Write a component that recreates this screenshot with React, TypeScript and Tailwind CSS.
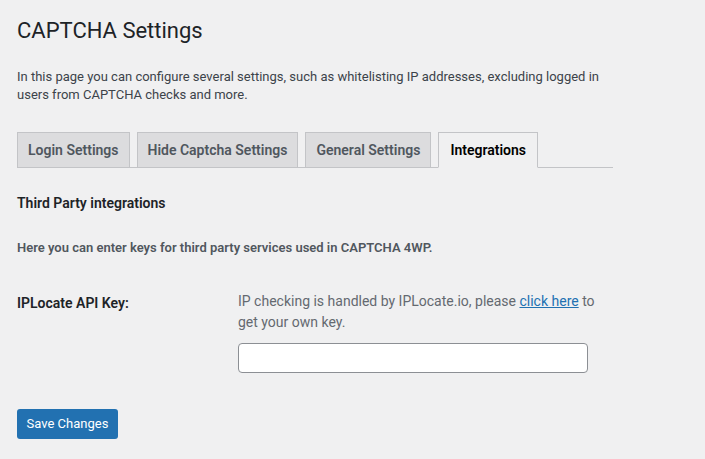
export default function App() {
  const tabs = ["Login Settings", "Hide Captcha Settings", "General Settings", "Integrations"];
  const active = "Integrations";

  return (
    <div
      className="min-h-[459px] w-[705px] bg-[#f0f0f1] px-[17px] text-[#3c434a]"
      style={{ fontFamily: "Roboto, 'Liberation Sans', sans-serif" }}
    >
      <h1 className="pt-[16px] text-[22px] leading-[30px] font-normal text-[#1d2327]">CAPTCHA Settings</h1>

      <p className="mt-[22px] w-[600px] text-[13px] leading-[18px] text-[#3c434a]">
        In this page you can configure several settings, such as whitelisting IP addresses, excluding logged in
        users from CAPTCHA checks and more.
      </p>

      {/* tabs */}
      <div className="mt-[28px] flex w-[596px] gap-[7px] border-b border-[#c3c4c7]">
        {tabs.map((t) => (
          <div
            key={t}
            className={
              t === active
                ? "-mb-px h-[36px] border border-[#c3c4c7] border-b-[#f0f0f1] bg-[#f0f0f1] px-[11px] py-[5px] text-[14px] leading-[24px] font-semibold text-black"
                : "h-[35px] border border-b-0 border-[#c3c4c7] bg-[#dcdcde] px-[10px] py-[5px] text-[14px] leading-[24px] font-semibold text-[#50575e]"
            }
          >
            {t}
          </div>
        ))}
      </div>

      <h3 className="mt-[25px] text-[14px] leading-[20px] font-semibold text-[#1d2327]">Third Party integrations</h3>
      <p className="mt-[25px] text-[13px] leading-[20px] font-semibold text-[#50575e]">
        Here you can enter keys for third party services used in CAPTCHA 4WP.
      </p>

      <div className="mt-[33px] flex">
        <div className="w-[221px] pt-[2px] text-[14px] leading-[20px] font-semibold text-[#1d2327]">IPLocate API Key:</div>
        <div className="w-[362px]">
          <p className="text-[14px] leading-[21px] text-[#646970]">
            IP checking is handled by IPLocate.io, please{" "}
            <a href="#" className="text-[#2271b1] underline">
              click here
            </a>{" "}
            to get your own key.
          </p>
          <input
            type="text"
            className="mt-[10px] h-[30px] w-[350px] rounded-[4px] border border-[#8c8f94] bg-white px-2 text-[14px]"
          />
        </div>
      </div>

      <button className="mt-[36px] h-[30px] w-[101px] rounded-[3px] bg-[#2271b1] text-[13px] text-white">
        Save Changes
      </button>
    </div>
  );
}
